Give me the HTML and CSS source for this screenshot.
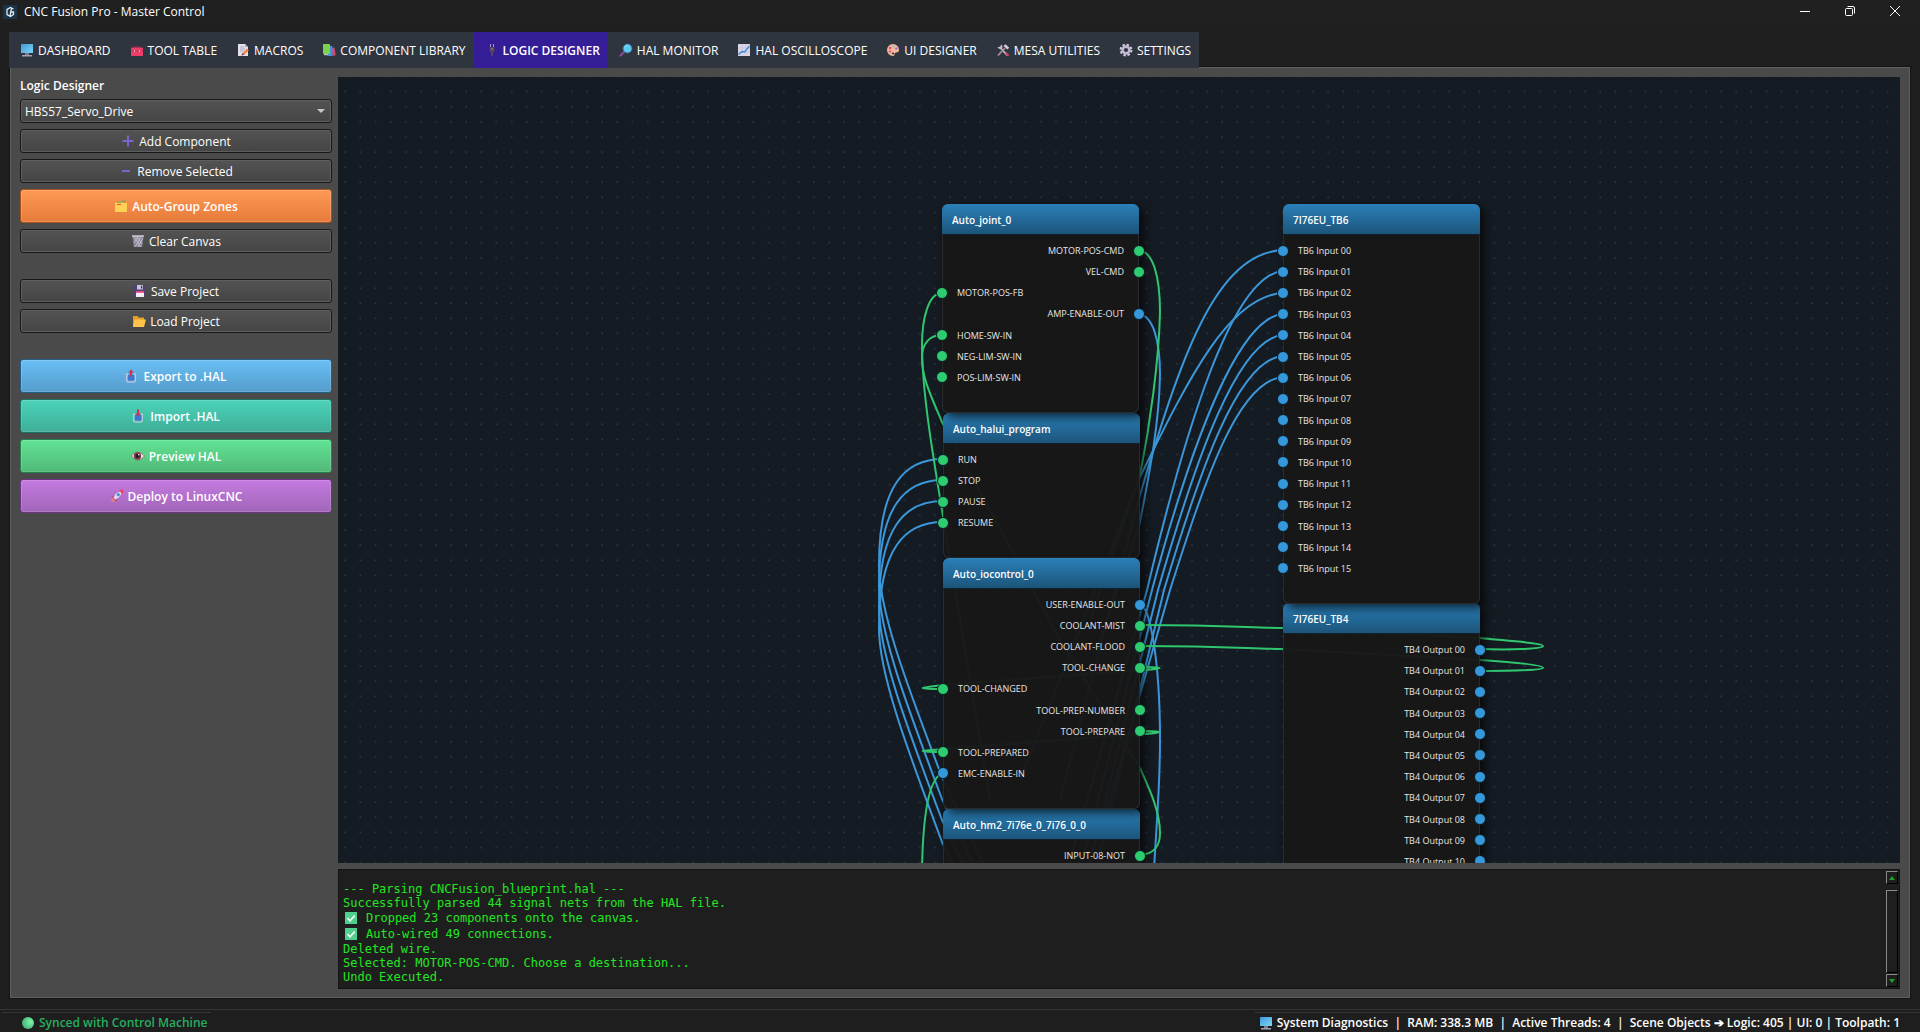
FILE: index.html
```html
<!DOCTYPE html>
<html lang="en">
<head>
    <meta charset="UTF-8">
    <meta name="viewport" content="width=device-width, initial-scale=1.0">
    <title>CNC Fusion Pro - Master Control</title>
    <link rel="stylesheet" href="styles.css">
</head>
<body>
    <!-- Icon set -->
    <svg class="icon-defs" aria-hidden="true">
        <linearGradient id="screen" x1="0" y1="0" x2="1" y2="1">
            <stop offset="0" stop-color="#3f9bd8"/>
            <stop offset="1" stop-color="#7fd4f7"/>
        </linearGradient>
        <radialGradient id="orb" cx="0.7" cy="0.4" r="0.8">
            <stop offset="0" stop-color="#7df5a8"/>
            <stop offset="1" stop-color="#3fa873"/>
        </radialGradient>
        <symbol id="i-monitor" viewBox="0 0 14 14">
            <rect x="1" y="1" width="12" height="9" rx="0.5" fill="url(#screen)"/>
            <path d="M5 10h4v2H5z" fill="#777b8c"/>
            <path d="M2 12h10v1.500H2z" fill="#a3a3b4"/>
        </symbol>
        <symbol id="i-toolbox" viewBox="0 0 14 14">
            <path d="M4.500 4.500V3.500h5v1" fill="none" stroke="#8f2946" stroke-width="1"/>
            <rect x="1" y="4.500" width="12" height="8.500" rx="1" fill="#ee3f6c"/>
            <path d="M1 7.500h12v1H1z" fill="#c92f59"/>
            <path d="M4 7.300h1v1.800H4zM9 7.300h1v1.800H9z" fill="#ffb3c4"/>
        </symbol>
        <symbol id="i-memo" viewBox="0 0 14 14">
            <path d="M2 1h7l3 3v9H2z" fill="#e4dfec"/>
            <path d="M9 1v3h3z" fill="#aaa2ba"/>
            <path d="M4 4h4M4 6h5M4 8h3" stroke="#9a94ad" stroke-width="0.700"/>
            <path d="M5.500 12.500l1-2.500 4.500-4.500 1.800 1.800-4.500 4.500z" fill="#f28544"/>
            <path d="M5.500 12.500l1-2.500 1.700 1.700z" fill="#6b4560"/>
        </symbol>
        <symbol id="i-books" viewBox="0 0 14 14">
            <path d="M10 5l2.500-0.500 1.200 7.800-3.200 0.700z" fill="#e3436b"/>
            <rect x="5.500" y="3" width="5" height="10" rx="0.800" fill="#3e93e0"/>
            <rect x="1" y="1" width="7" height="10" rx="0.800" fill="#7fd04b"/>
            <path d="M2 11.200h4v1H2z" fill="#e5e5ee"/>
        </symbol>
        <symbol id="i-plug" viewBox="0 0 14 14">
            <path d="M5.500 1v3M8.500 1v3" stroke="#a99bb8" stroke-width="1"/>
            <path d="M4.500 4h5v4L8 10H6L4.500 8z" fill="#4f4562"/>
            <path d="M7 10v3" stroke="#5f556f" stroke-width="1.400"/>
            <path d="M6 5.500h2v1H6z" fill="#c88d4b"/>
        </symbol>
        <symbol id="i-search" viewBox="0 0 14 14">
            <path d="M5.500 8.500L1.500 12.500" stroke="#8a4ba0" stroke-width="2.200" stroke-linecap="round"/>
            <circle cx="8.500" cy="5.500" r="4.400" fill="#60c9f2" stroke="#347da8" stroke-width="0.800"/>
            <path d="M6 4.500a3 3 0 0 1 2.500-1.700" fill="none" stroke="#b9ecff" stroke-width="0.800"/>
        </symbol>
        <symbol id="i-chart" viewBox="0 0 14 14">
            <rect x="1" y="1" width="12" height="12" rx="0.500" fill="#dcd7e8"/>
            <path d="M1 5h12M1 9h12M5 1v12M9 1v12" stroke="#bdb6cf" stroke-width="0.500"/>
            <path d="M1.500 11.500l3.500-3 2.500 0.500 5-6" fill="none" stroke="#318bd3" stroke-width="1.300"/>
        </symbol>
        <symbol id="i-palette" viewBox="0 0 14 14">
            <path d="M7 1a6 6 0 0 1 6 6c0 3-3 2-4 3s0 3-2 3A6 6 0 0 1 7 1z" fill="#f3b79c"/>
            <circle cx="4" cy="5" r="1.200" fill="#e84a67"/>
            <circle cx="7.200" cy="3.500" r="1.100" fill="#69c8e8"/>
            <circle cx="10.300" cy="5.500" r="1.100" fill="#8a5bc9"/>
            <circle cx="4" cy="8.500" r="1.200" fill="#e05a8a"/>
            <circle cx="7" cy="10.500" r="1.100" fill="#34343c"/>
        </symbol>
        <symbol id="i-tools" viewBox="0 0 14 14">
            <path d="M11.500 12.500L4 4.500" stroke="#c5bcd0" stroke-width="1.800"/>
            <path d="M1.500 4a3 3 0 0 0 4.500 1.500A3 3 0 0 0 5 1.500L4.500 3.500 3 4z" fill="#c5bcd0"/>
            <path d="M2 12.500L9 5" stroke="#a7909e" stroke-width="1.800"/>
            <path d="M7.500 3l2-1.800 3.700 3.600-1.800 1.700z" fill="#d5cddd"/>
            <path d="M10 10l2.500 2.700" stroke="#d8405f" stroke-width="2"/>
        </symbol>
        <symbol id="i-gear" viewBox="0 0 14 14">
            <circle cx="7" cy="7" r="5.300" fill="none" stroke="#d1c7df" stroke-width="2.200" stroke-dasharray="2.400 1.760"/>
            <circle cx="7" cy="7" r="3.400" fill="none" stroke="#c3b8d4" stroke-width="2.600"/>
        </symbol>
        <symbol id="i-plus" viewBox="0 0 14 14">
            <path d="M7 1.500v11M1.500 7h11" stroke="#7c62cf" stroke-width="2"/>
        </symbol>
        <symbol id="i-minus" viewBox="0 0 14 14">
            <path d="M3 7h8" stroke="#7c62cf" stroke-width="2"/>
        </symbol>
        <symbol id="i-dividers" viewBox="0 0 14 14">
            <path d="M1 3h5l1 1h6v9H1z" fill="#e8b22d"/>
            <path d="M3 2.500h4v1.200H3zM8 1.500h4v1.500H8z" fill="#8aa85b"/>
            <path d="M1 4h12v9H1z" fill="#ffd257"/>
            <path d="M3 5h4v1H3z" fill="#d05a3f"/>
        </symbol>
        <symbol id="i-trash" viewBox="0 0 14 14">
            <path d="M1.500 2h11l-1.300 11H2.800z" fill="#8b8597"/>
            <path d="M1 2h12" stroke="#d8d2e0" stroke-width="1.400"/>
            <path d="M3 3l7 10M6 3l5 7M10 3L4 13M7 3L3 9M12 4L7 13" stroke="#cfc9d8" stroke-width="0.800"/>
        </symbol>
        <symbol id="i-floppy" viewBox="0 0 14 14">
            <path d="M1 1h11l1 1v11H1z" fill="#503f78"/>
            <path d="M4 1h6v4.500H4z" fill="#c9c3d6"/>
            <path d="M8 1.800h1.300v2.800H8z" fill="#443366"/>
            <path d="M3 7h8v6H3z" fill="#f0edf4"/>
            <path d="M3 7h8v1.800H3z" fill="#e0487a"/>
        </symbol>
        <symbol id="i-folder" viewBox="0 0 14 14">
            <path d="M1 2h4.500l1 1.500H12V13H1z" fill="#e69b25"/>
            <path d="M2.500 5.500H14L12 13H1z" fill="#ffc34a"/>
        </symbol>
        <symbol id="i-export" viewBox="0 0 14 14">
            <path d="M3 5H1.800v6.500q0 1.500 1.500 1.500h5.400q1.500 0 1.500-1.500V5H9" fill="none" stroke="#d9cfe6" stroke-width="1.200"/>
            <path d="M2.800 6h6.600v5.500H2.800z" fill="#3c78cf"/>
            <path d="M6 0.500l2.800 3H7v4H5v-4H3.200z" fill="#d22e55"/>
        </symbol>
        <symbol id="i-import" viewBox="0 0 14 14">
            <path d="M3 5H1.800v6.500q0 1.500 1.500 1.500h5.400q1.500 0 1.500-1.500V5H9" fill="none" stroke="#d9cfe6" stroke-width="1.200"/>
            <path d="M2.800 6h6.600v5.500H2.800z" fill="#3c78cf"/>
            <path d="M6 7.500l2.800-3H7v-4H5v4H3.200z" fill="#d22e55"/>
        </symbol>
        <symbol id="i-eye" viewBox="0 0 14 14">
            <path d="M0.500 7q6-8 13 0-6.500 8-13 0z" fill="#f1e9f0" stroke="#6d3b48" stroke-width="0.600"/>
            <circle cx="6.500" cy="7" r="3.700" fill="#7c3b47"/>
            <circle cx="6.500" cy="7" r="2" fill="#251a20"/>
            <circle cx="7.800" cy="5.800" r="0.800" fill="#fff"/>
        </symbol>
        <symbol id="i-rocket" viewBox="0 0 14 14">
            <path d="M4 6L1.500 8l2 1zM8 10l-2 2.500-1-2z" fill="#e0325f"/>
            <path d="M3.500 8.500Q6 2.500 11.500 2.500 11.500 8 5.500 10.500z" fill="#ded8ea"/>
            <path d="M9 1.500Q11 0.500 13.500 0.500 13.500 3 12.500 5z" fill="#ee4067"/>
            <circle cx="8.300" cy="5.700" r="1.600" fill="#3f93d8"/>
            <path d="M1 13l1-3.500L4.500 12z" fill="#f5883e"/>
        </symbol>
        <symbol id="i-check" viewBox="0 0 14 14">
            <rect x="1" y="1" width="12" height="12" fill="#4fcf8d"/>
            <path d="M3.500 7l2.500 2.800 4.800-5.300" fill="none" stroke="#fff" stroke-width="1.500"/>
        </symbol>
        <symbol id="i-orb" viewBox="0 0 14 14">
            <circle cx="7" cy="7" r="6" fill="url(#orb)"/>
        </symbol>
    </svg>

    <header class="titlebar">
        <svg class="logo" viewBox="0 0 14 14" aria-hidden="true">
            <rect width="14" height="14" rx="1" fill="#1c3348"/>
            <path d="M10.500 4L7.500 2.500 4 4.500v5L7.500 11.500 10.500 9.500V7H7.500M7 11L8.500 3.500" fill="none" stroke="#e2edf5" stroke-width="1.300"/>
        </svg>
        <span class="title">CNC Fusion Pro - Master Control</span>
        <div class="window-buttons">
            <button type="button" aria-label="Minimize"><svg viewBox="0 0 12 12"><path d="M1 6.500h10"/></svg></button>
            <button type="button" aria-label="Restore"><svg viewBox="0 0 12 12"><rect x="1.500" y="3.500" width="7" height="7" rx="1"/><path d="M3.500 1.500H9q1.500 0 1.500 1.500v5.500"/></svg></button>
            <button type="button" aria-label="Close"><svg viewBox="0 0 12 12"><path d="M1 1l10 10M11 1L1 11"/></svg></button>
        </div>
    </header>

    <nav class="tabs">
        <a href="#dashboard"><svg class="icon"><use href="#i-monitor"/></svg>DASHBOARD</a>
        <a href="#tools"><svg class="icon"><use href="#i-toolbox"/></svg>TOOL TABLE</a>
        <a href="#macros"><svg class="icon"><use href="#i-memo"/></svg>MACROS</a>
        <a href="#library"><svg class="icon"><use href="#i-books"/></svg>COMPONENT LIBRARY</a>
        <a href="#logic" class="active"><svg class="icon"><use href="#i-plug"/></svg>LOGIC DESIGNER</a>
        <a href="#monitor"><svg class="icon"><use href="#i-search"/></svg>HAL MONITOR</a>
        <a href="#scope"><svg class="icon"><use href="#i-chart"/></svg>HAL OSCILLOSCOPE</a>
        <a href="#ui"><svg class="icon"><use href="#i-palette"/></svg>UI DESIGNER</a>
        <a href="#mesa"><svg class="icon"><use href="#i-tools"/></svg>MESA UTILITIES</a>
        <a href="#settings"><svg class="icon"><use href="#i-gear"/></svg>SETTINGS</a>
    </nav>

    <main class="panel">
        <aside class="sidebar">
            <label for="component">Logic Designer</label>
            <div class="select-box">
                <select id="component">
                    <option>HBS57_Servo_Drive</option>
                </select>
            </div>
            <button type="button" class="btn"><svg class="icon"><use href="#i-plus"/></svg>Add Component</button>
            <button type="button" class="btn"><svg class="icon"><use href="#i-minus"/></svg>Remove Selected</button>
            <button type="button" class="btn big orange"><svg class="icon"><use href="#i-dividers"/></svg>Auto-Group Zones</button>
            <button type="button" class="btn"><svg class="icon"><use href="#i-trash"/></svg>Clear Canvas</button>
            <button type="button" class="btn section"><svg class="icon"><use href="#i-floppy"/></svg>Save Project</button>
            <button type="button" class="btn"><svg class="icon"><use href="#i-folder"/></svg>Load Project</button>
            <button type="button" class="btn big blue section"><svg class="icon"><use href="#i-export"/></svg>Export to .HAL</button>
            <button type="button" class="btn big teal"><svg class="icon"><use href="#i-import"/></svg>Import .HAL</button>
            <button type="button" class="btn big green"><svg class="icon"><use href="#i-eye"/></svg>Preview HAL</button>
            <button type="button" class="btn big purple"><svg class="icon"><use href="#i-rocket"/></svg>Deploy to LinuxCNC</button>
        </aside>

        <div class="workspace">
            <div class="canvas">
                <svg class="wires" aria-hidden="true">
                    <pattern id="grid" x="-0.500" y="6.800" width="15.120" height="15.120" patternUnits="userSpaceOnUse">
                        <rect x="7" y="7" width="1.600" height="1.600" fill="#2d3944"/>
                    </pattern>
                    <rect width="100%" height="100%" fill="url(#grid)"/>
                    <g transform="translate(-338 -77)">
                        <g class="blue-wire">
                            <!-- halui program inputs -->
                            <path d="M943 459C905 459 879 485 879 565C879 610 905 680 942 777L1000 900"/>
                            <path d="M943 480C905 480 879 506 879 586C879 631 905 701 942 799L1000 921"/>
                            <path d="M943 501C905 501 879 527 879 607C879 652 905 722 942 820L1000 942"/>
                            <path d="M943 522C905 522 879 548 879 628C879 673 905 743 942 842L1000 963"/>
                            <!-- TB6 inputs -->
                            <path d="M1283 250C1215 253 1180 360 1140 495L1060 800"/>
                            <path d="M1283 271C1232 275 1185 430 1147 590L1070 860"/>
                            <path d="M1283 293C1230 296 1190 375 1140 477L1020 780"/>
                            <path d="M1283 314C1238 317 1191 445 1152 590L1080 870"/>
                            <path d="M1283 335C1238 338 1196 458 1158 590L1088 870"/>
                            <path d="M1283 356C1238 359 1200 470 1164 590L1096 870"/>
                            <path d="M1283 377C1238 380 1205 480 1170 590L1104 820"/>
                            <!-- enable outputs -->
                            <path d="M1139 314C1153 316 1160 340 1160 375C1159 425 1150 470 1139 527L1100 640"/>
                            <path d="M1140 604C1150 607 1160 660 1160 740C1160 790 1156 830 1154 870"/>
                        </g>
                        <g class="green-wire">
                            <path d="M1139 250C1153 252 1160 276 1160 312C1159 360 1150 425 1140 475L1090 620"/>
                            <path d="M942 293C928 293 922 320 922 345C922 390 932 450 942 510L990 800"/>
                            <path d="M942 335C930 335 922 343 922 358C922 378 931 396 942 422L1060 640L1140 768C1150 790 1160 812 1160 833C1160 848 1153 854 1140 855"/>
                            <path d="M943 773C930 777 923 810 922 870"/>
                            <path d="M1140 625C1230 625 1250 628 1283 628L1480 638C1510 641 1543 643 1543 646C1543 649 1510 650 1480 649"/>
                            <path d="M1140 646C1230 646 1250 649 1283 649L1480 660C1510 662 1543 665 1543 668C1543 670 1510 671 1480 671"/>
                            <path d="M1140 667C1150 667 1158 667 1159 668C1156 669 1150 670 1140 670L943 685C935 686 924 687 923 688C924 689 935 689 943 689"/>
                            <path d="M1140 731C1150 731 1158 731 1159 732C1156 733 1150 734 1140 734L943 749C935 750 924 750 923 751C924 752 935 752 943 752"/>
                        </g>
                    </g>
                </svg>

                <section class="node joint">
                    <h2>Auto_joint_0</h2>
                    <ul>
                        <li class="out g">MOTOR-POS-CMD</li>
                        <li class="out g">VEL-CMD</li>
                        <li class="in g">MOTOR-POS-FB</li>
                        <li class="out b">AMP-ENABLE-OUT</li>
                        <li class="in g">HOME-SW-IN</li>
                        <li class="in g">NEG-LIM-SW-IN</li>
                        <li class="in g">POS-LIM-SW-IN</li>
                    </ul>
                </section>

                <section class="node halui">
                    <h2>Auto_halui_program</h2>
                    <ul>
                        <li class="in g">RUN</li>
                        <li class="in g">STOP</li>
                        <li class="in g">PAUSE</li>
                        <li class="in g">RESUME</li>
                    </ul>
                </section>

                <section class="node iocontrol">
                    <h2>Auto_iocontrol_0</h2>
                    <ul>
                        <li class="out b">USER-ENABLE-OUT</li>
                        <li class="out g">COOLANT-MIST</li>
                        <li class="out g">COOLANT-FLOOD</li>
                        <li class="out g">TOOL-CHANGE</li>
                        <li class="in g">TOOL-CHANGED</li>
                        <li class="out g">TOOL-PREP-NUMBER</li>
                        <li class="out g">TOOL-PREPARE</li>
                        <li class="in g">TOOL-PREPARED</li>
                        <li class="in b">EMC-ENABLE-IN</li>
                    </ul>
                </section>

                <section class="node hm2">
                    <h2>Auto_hm2_7i76e_0_7i76_0_0</h2>
                    <ul>
                        <li class="out g">INPUT-08-NOT</li>
                    </ul>
                </section>

                <section class="node tb6">
                    <h2>7I76EU_TB6</h2>
                    <ul>
                        <li class="in b">TB6 Input 00</li>
                        <li class="in b">TB6 Input 01</li>
                        <li class="in b">TB6 Input 02</li>
                        <li class="in b">TB6 Input 03</li>
                        <li class="in b">TB6 Input 04</li>
                        <li class="in b">TB6 Input 05</li>
                        <li class="in b">TB6 Input 06</li>
                        <li class="in b">TB6 Input 07</li>
                        <li class="in b">TB6 Input 08</li>
                        <li class="in b">TB6 Input 09</li>
                        <li class="in b">TB6 Input 10</li>
                        <li class="in b">TB6 Input 11</li>
                        <li class="in b">TB6 Input 12</li>
                        <li class="in b">TB6 Input 13</li>
                        <li class="in b">TB6 Input 14</li>
                        <li class="in b">TB6 Input 15</li>
                    </ul>
                </section>

                <section class="node tb4">
                    <h2>7I76EU_TB4</h2>
                    <ul>
                        <li class="out b">TB4 Output 00</li>
                        <li class="out b">TB4 Output 01</li>
                        <li class="out b">TB4 Output 02</li>
                        <li class="out b">TB4 Output 03</li>
                        <li class="out b">TB4 Output 04</li>
                        <li class="out b">TB4 Output 05</li>
                        <li class="out b">TB4 Output 06</li>
                        <li class="out b">TB4 Output 07</li>
                        <li class="out b">TB4 Output 08</li>
                        <li class="out b">TB4 Output 09</li>
                        <li class="out b">TB4 Output 10</li>
                    </ul>
                </section>
            </div>

            <div class="console">
                <div class="log">
                    <p>--- Parsing CNCFusion_blueprint.hal ---</p>
                    <p>Successfully parsed 44 signal nets from the HAL file.</p>
                    <p class="ok"><svg class="icon"><use href="#i-check"/></svg>Dropped 23 components onto the canvas.</p>
                    <p class="ok"><svg class="icon"><use href="#i-check"/></svg>Auto-wired 49 connections.</p>
                    <p>Deleted wire.</p>
                    <p>Selected: MOTOR-POS-CMD. Choose a destination...</p>
                    <p>Undo Executed.</p>
                </div>
                <div class="scrollbar">
                    <button type="button" aria-label="Scroll up"><svg viewBox="0 0 6 4"><path d="M3 0l3 4H0z"/></svg></button>
                    <div class="thumb"></div>
                    <button type="button" aria-label="Scroll down"><svg viewBox="0 0 6 4"><path d="M3 4l3-4H0z"/></svg></button>
                </div>
            </div>
        </div>
    </main>

    <footer class="statusbar">
        <div class="sync"><svg class="icon"><use href="#i-orb"/></svg>Synced with Control Machine</div>
        <div class="diagnostics"><svg class="icon"><use href="#i-monitor"/></svg>System Diagnostics &nbsp;|&nbsp; RAM: 338.3 MB &nbsp;|&nbsp; Active Threads: 4 &nbsp;|&nbsp; Scene Objects ➔ Logic: 405 | UI: 0 | Toolpath: 1</div>
    </footer>
</body>
</html>
```
FILE: styles.css
```css
* {
    box-sizing: border-box;
}

body {
    margin: 0;
    height: 100vh;
    display: flex;
    flex-direction: column;
    overflow: hidden;
    background-color: #1e1e1e;
    color: #fff;
    font-family: "Open Sans", "Noto Sans", sans-serif;
    font-size: 12px;
}

button {
    font: inherit;
    color: inherit;
}

.icon-defs {
    position: absolute;
    width: 0;
    height: 0;
}

.icon {
    width: 14px;
    height: 14px;
    flex: none;
}

/* Title bar */
.titlebar {
    display: flex;
    align-items: center;
    height: 23px;
    padding: 0 19px 0 3px;
    background-color: #202020;
}

.logo {
    width: 14px;
    height: 14px;
    margin-right: 7px;
}

.window-buttons {
    display: flex;
    gap: 33px;
    margin-left: auto;
    padding-bottom: 2px;
}

.window-buttons button {
    display: flex;
    padding: 0;
    border: none;
    background: none;
}

.window-buttons svg {
    width: 12px;
    height: 12px;
    fill: none;
    stroke: #fff;
}

/* Tabs */
.tabs {
    display: flex;
    align-self: flex-start;
    height: 36px;
    margin: 9px 0 0 9px;
    background-color: #2f353f;
    position: relative;
}

.tabs a {
    display: flex;
    align-items: center;
    gap: 4px;
    padding: 0 8px 0 11px;
    color: #fff;
    text-decoration: none;
    white-space: nowrap;
}

.tabs a.active {
    background-color: #341d96;
    font-weight: 600;
}

/* Main panel */
.panel {
    flex: 1;
    min-height: 0;
    display: flex;
    gap: 6px;
    margin: -1px 10px 0 10px;
    padding: 9px 9px 8px;
    background-color: #4a4a4a;
    border: 1px solid #606060;
    box-shadow: 0 0 0 1px #141414;
}

.sidebar {
    display: flex;
    flex-direction: column;
    gap: 6px;
    width: 312px;
    flex: none;
}

.sidebar label {
    height: 16px;
    line-height: 18px;
    font-weight: 600;
}

.select-box {
    position: relative;
    display: flex;
}

.select-box::after {
    content: "";
    position: absolute;
    top: 10px;
    right: 7px;
    border: 4px solid transparent;
    border-top-color: #c8c8c8;
    pointer-events: none;
}

select,
.btn {
    height: 24px;
    border: 1px solid #181818;
    border-radius: 3px;
    background: linear-gradient(#535353, #454545);
    box-shadow: inset 0 0 0 1px #5e5e5e;
}

select {
    flex: 1;
    padding: 0 4px;
    appearance: none;
    color: #fff;
    font: inherit;
}

.btn {
    display: flex;
    align-items: center;
    justify-content: center;
    gap: 4px;
    padding: 0;
}

.btn.section {
    margin-top: 20px;
}

.btn.big {
    height: 34px;
    font-weight: 600;
    box-shadow: inset 0 0 0 1px rgba(255, 255, 255, 0.15);
}

.btn.orange {
    background: linear-gradient(#ff9955, #e67b3a);
    border-color: #a8521c;
}

.btn.blue {
    background: linear-gradient(#69bff5, #559ccb);
    border-color: #235f87;
}

.btn.teal {
    background: linear-gradient(#4bd3b9, #3fae98);
    border-color: #1a7463;
}

.btn.green {
    background: linear-gradient(#62e394, #50b978);
    border-color: #23834a;
}

.btn.purple {
    background: linear-gradient(#c47be0, #a165b9);
    border-color: #6b3584;
}

.workspace {
    flex: 1;
    min-width: 0;
    display: flex;
    flex-direction: column;
    gap: 6px;
}

/* Node canvas */
.canvas {
    position: relative;
    flex: 1;
    min-height: 0;
    overflow: hidden;
    background-color: #151b22;
}

.wires {
    position: absolute;
    width: 100%;
    height: 100%;
}

.blue-wire,
.green-wire {
    fill: none;
    stroke-width: 2;
}

.blue-wire {
    stroke: #3b97d9;
}

.green-wire {
    stroke: #30c66f;
}

.node {
    position: absolute;
    display: flex;
    flex-direction: column;
    width: 197px;
    padding-bottom: 25px;
    border-radius: 6px;
    background-color: rgba(24, 24, 24, 0.97);
    box-shadow: 4px 4px 10px rgba(0, 0, 0, 0.7), inset 0 0 0 1px #2b2b2b;
}

.node h2 {
    height: 31px;
    margin: 0;
    padding: 0 10px;
    border-bottom: 1px solid #10202c;
    border-radius: 6px 6px 0 0;
    background: linear-gradient(#2a80b9, #1c547a);
    font-size: 10px;
    font-weight: 600;
    line-height: 33px;
}

.node ul {
    flex: 1;
    display: grid;
    grid-auto-rows: 1fr;
    margin: 5px 0 0;
    padding: 0;
    list-style: none;
    font-size: 9px;
    color: #e6e6e6;
}

.node li {
    display: flex;
    align-items: center;
    gap: 9px;
}

.node li::before {
    content: "";
    width: 10px;
    height: 10px;
    border: 1px solid #0c1a22;
    border-radius: 50%;
}

.node .in {
    margin-left: -6px;
}

.node .out {
    flex-direction: row-reverse;
    margin-right: -6px;
}

.node .b::before {
    background-color: #3498db;
}

.node .g::before {
    background-color: #2ecc71;
}

.joint {
    left: 604px;
    top: 127px;
    height: 209px;
    z-index: 3;
}

.halui {
    left: 605px;
    top: 336px;
    height: 145px;
    z-index: 1;
}

.iocontrol {
    left: 605px;
    top: 481px;
    height: 251px;
    z-index: 2;
}

.hm2 {
    left: 605px;
    top: 732px;
    height: 82px;
    z-index: 1;
}

.tb6 {
    left: 945px;
    top: 127px;
    height: 400px;
    z-index: 2;
}

.tb4 {
    left: 945px;
    top: 526px;
    height: 294px;
    z-index: 1;
}

/* Console */
.console {
    display: flex;
    height: 120px;
    border: 1px solid #141414;
    background-color: #1e1e1e;
}

.log {
    flex: 1;
    padding: 12px 4px 0;
    color: #22e622;
    font-family: "DejaVu Sans Mono", monospace;
    font-size: 12px;
    line-height: 14px;
}

.log p {
    margin: 0;
}

.log .ok {
    display: flex;
    align-items: center;
    gap: 8px;
    height: 16px;
    padding-left: 1px;
}

.scrollbar {
    display: flex;
    flex-direction: column;
    justify-content: space-between;
    width: 14px;
    padding: 1px 1px;
}

.scrollbar button,
.thumb {
    border: 1px solid #8a8a8a;
    border-right-color: #000;
    border-bottom-color: #000;
    background: none;
}

.scrollbar button {
    display: flex;
    align-items: center;
    justify-content: center;
    height: 13px;
    padding: 0;
}

.scrollbar svg {
    width: 6px;
    height: 4px;
    fill: #22a022;
}

.thumb {
    flex: 1;
    margin: 6px 0 1px;
}

/* Status bar */
.statusbar {
    display: flex;
    justify-content: space-between;
    height: 23px;
    margin-top: 11px;
    padding: 2px 0 0 2px;
    border-top: 1px solid #363636;
    font-weight: 600;
}

.statusbar div {
    display: flex;
    align-items: center;
    gap: 4px;
    border-top: 1px solid #363636;
    white-space: nowrap;
}

.sync {
    padding: 0 4px 0 19px;
    color: #27ae60;
}

.diagnostics {
    padding: 0 20px 0 4px;
}
```
